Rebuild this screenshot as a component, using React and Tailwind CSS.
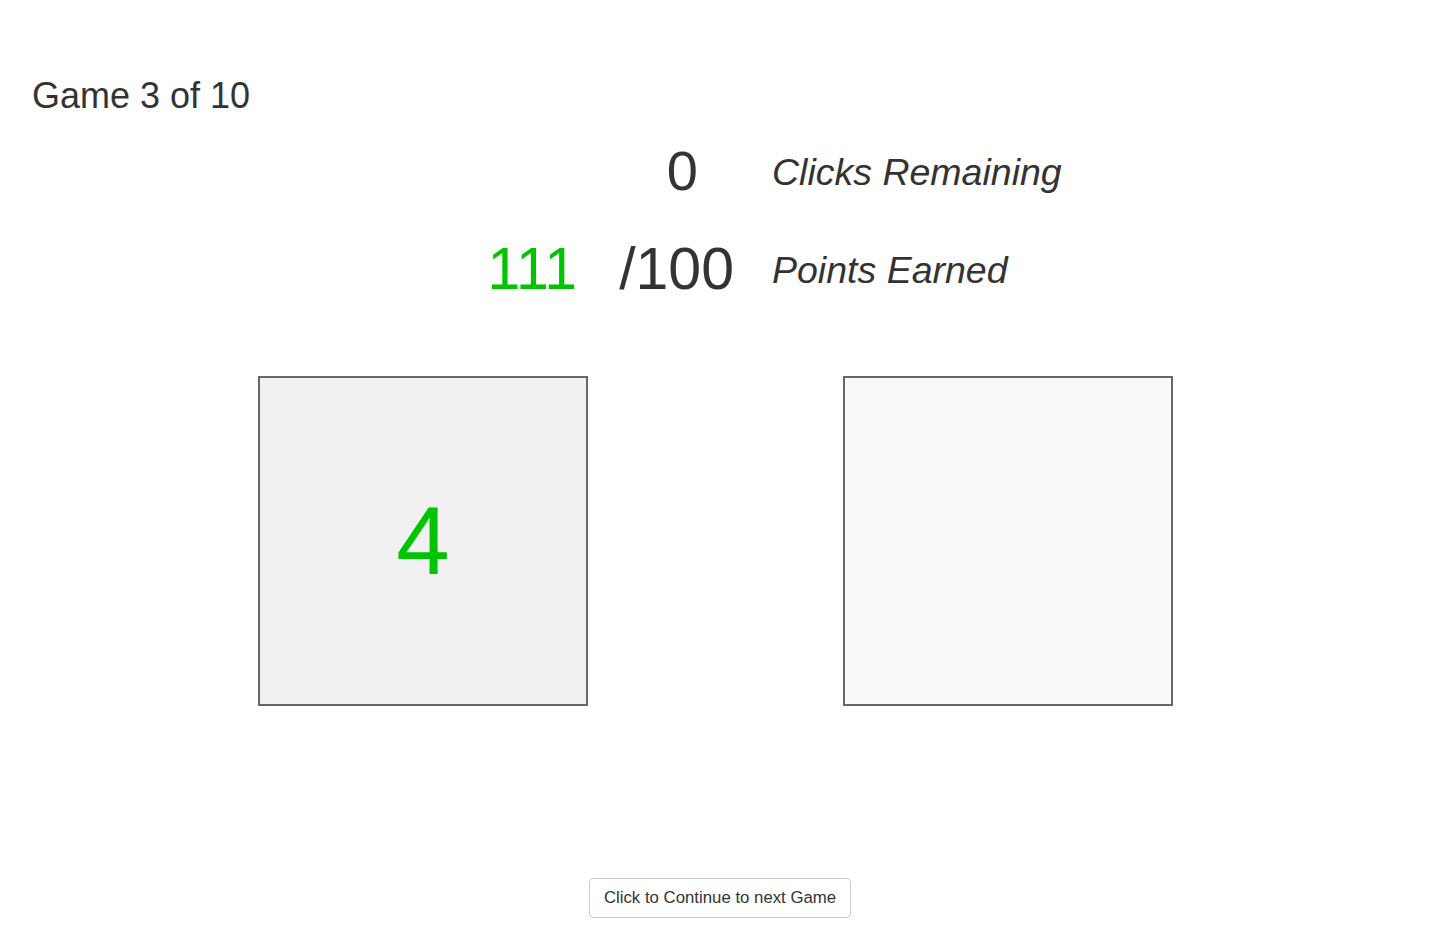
import React from 'react';

const Card = ({ bg, children }) => (
  <div
    className={`w-[330px] h-[330px] border-2 border-[#666666] flex items-center justify-center ${bg}`}
  >
    {children}
  </div>
);

export default function App() {
  return (
    <div className="w-[1442px] h-[937px] bg-white text-[#333333] font-['Liberation_Sans',Arial,sans-serif] flex flex-col">
      <h1 className="text-[36px] leading-[1.1] pt-[76px] pl-[32px]">Game 3 of 10</h1>

      {/* score rows */}
      <div className="mt-[24px] flex flex-col gap-[38px]">
        <div className="flex items-center h-[62px]">
          <div className="w-[772px] pr-[74px] text-right text-[56px] leading-[1.1]">0</div>
          <div className="italic text-[37.5px] leading-[1.1] mb-[-4px]">Clicks Remaining</div>
        </div>
        <div className="flex items-center h-[62px]">
          <div className="w-[772px] pr-[38px] text-right text-[59px] leading-[1.1] mt-[-2px]">
            <span className="text-[#00c400] mr-[42px]">111</span>
            <span>/100</span>
          </div>
          <div className="italic text-[37.5px] leading-[1.1]">Points Earned</div>
        </div>
      </div>

      {/* the two tiles */}
      <div className="mt-[74px] pl-[258px] flex gap-[255px]">
        <Card bg="bg-[#f1f1f1]">
          <span className="text-[#00c400] text-[96px] leading-none">4</span>
        </Card>
        <Card bg="bg-[#f9f9f9]" />
      </div>

      <div className="mt-[172px] flex justify-center">
        <button className="ml-[-2px] px-[14px] py-[7px] text-[16.8px] leading-[1.42857] border border-[#cccccc] rounded-[4px] bg-white text-[#333333]">
          Click to Continue to next Game
        </button>
      </div>
    </div>
  );
}
